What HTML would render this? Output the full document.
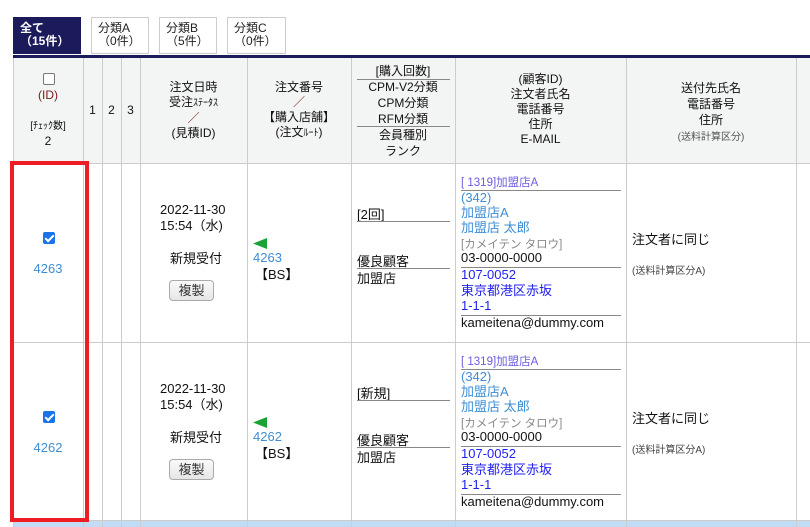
<!DOCTYPE html>
<html><head><meta charset="utf-8">
<style>
*{margin:0;padding:0;box-sizing:border-box}
body{width:810px;height:527px;overflow:hidden;background:#fff;position:relative;font-family:"Liberation Sans","Noto Sans CJK JP",sans-serif;font-size:12px;color:#111}
.a{position:absolute;white-space:nowrap}
.tab{position:absolute;top:17px;height:37px;border:1px solid #ccc;background:#fff;line-height:13px;font-size:12px;padding:4px 0 0 6px;color:#222}
.v{position:absolute;top:58px;height:469px;width:1px;background:#ccc}
.h{position:absolute;left:13px;width:797px;height:1px;background:#ccc}
.c{text-align:center}
.ln{position:absolute;height:1px;background:#888}
.blue{color:#3d8ed6}
.pur{color:#6b5ce0}
.bl{color:#2222ee}
.gr{color:#888}
.r .a{font-size:13px}
.r .a.s{font-size:10px}
.r .a.m{font-size:11.5px}
.cb{position:absolute;width:12px;height:12px;border-radius:2px;background:#1a73e8}
.cb:after{content:"";position:absolute;left:4px;top:1px;width:3px;height:7px;border:solid #fff;border-width:0 2px 2px 0;transform:rotate(45deg)}
.btn{position:absolute;width:45px;height:21px;border:1px solid #aaa;border-radius:4px;background:linear-gradient(#fafafa,#e6e6e6);text-align:center;line-height:19px;font-size:13px;color:#333}
</style></head><body>
<div class="tab" style="left:13px;width:68px;background:#1b1b5c;border-color:#1b1b5c;color:#fff;font-weight:bold">全て<br>（15件）</div>
<div class="tab" style="left:91px;width:58px">分類A<br>（0件）</div>
<div class="tab" style="left:159px;width:58px">分類B<br>（5件）</div>
<div class="tab" style="left:227px;width:59px">分類C<br>（0件）</div>
<div class="a" style="left:13px;top:55px;width:797px;height:3px;background:#1b1b5c"></div>
<div class="a" style="left:13px;top:58px;width:797px;height:105px;background:#f3f4f4"></div>
<div class="a" style="left:13px;top:520px;width:797px;height:7px;background:#c3dcf5"></div>

<div class="v" style="left:13px"></div>
<div class="v" style="left:83px"></div>
<div class="v" style="left:102px"></div>
<div class="v" style="left:121px"></div>
<div class="v" style="left:140px"></div>
<div class="v" style="left:247px"></div>
<div class="v" style="left:351px"></div>
<div class="v" style="left:455px"></div>
<div class="v" style="left:626px"></div>
<div class="v" style="left:796px"></div>
<div class="h" style="top:163px"></div>
<div class="h" style="top:342px"></div>
<div class="h" style="top:520px"></div>

<!-- header -->
<div class="a" style="left:43px;top:73px;width:12px;height:12px;border:1px solid #777;border-radius:2px;background:#fff"></div>
<div class="a c" style="left:13px;top:88px;width:70px;color:#7a1a1a;line-height:15px">(ID)</div>
<div class="a c" style="left:13px;top:120px;width:70px;font-size:10px;line-height:14px">[ﾁｪｯｸ数]<br><span style="font-size:12px">2</span></div>
<div class="a c" style="left:83px;top:103px;width:19px">1</div>
<div class="a c" style="left:102px;top:103px;width:19px">2</div>
<div class="a c" style="left:121px;top:103px;width:19px">3</div>
<div class="a c" style="left:140px;top:80px;width:107px;line-height:15px">注文日時<br>受注<span style="font-size:10px">ｽﾃｰﾀｽ</span><br><span style="color:#7a1a1a">／</span><br>(見積ID)</div>
<div class="a c" style="left:247px;top:80px;width:104px;line-height:15px">注文番号<br><span style="color:#7a1a1a">／</span><br>【購入店舗】<br>(注文<span style="font-size:10px">ﾙｰﾄ</span>)</div>
<div class="a c" style="left:351px;top:63px;width:104px;line-height:16px">[購入回数]<br>CPM-V2分類<br>CPM分類<br>RFM分類<br>会員種別<br>ランク</div>
<div class="ln" style="left:357px;top:79px;width:93px"></div>
<div class="ln" style="left:357px;top:126px;width:93px"></div>
<div class="a c" style="left:455px;top:72px;width:171px;line-height:15px">(顧客ID)<br>注文者氏名<br>電話番号<br>住所<br>E-MAIL</div>
<div class="a c" style="left:626px;top:80px;width:170px;line-height:16px">送付先氏名<br>電話番号<br>住所<br><span style="font-size:10px;color:#555">(送料計算区分)</span></div>

<div class="r" style="position:absolute;left:0;top:0;width:810px;height:527px">
<div class="cb" style="left:43px;top:232px"></div>
<div class="a c blue" style="left:13px;top:261px;width:70px">4263</div>
<div class="a" style="left:160px;top:202px;line-height:16px">2022-11-30<br>15:54（水)</div>
<div class="a" style="left:170px;top:248px">新規受付</div>
<div class="btn" style="left:169px;top:280px">複製</div>
<svg class="a" style="left:253px;top:238px" width="16" height="11"><path d="M0 5.5 L14 0 L14 11 Z" fill="#1aa335"/></svg>
<div class="a blue" style="left:253px;top:250px">4263</div>
<div class="a" style="left:255px;top:264px">【BS】</div>
<div class="a" style="left:357px;top:204px">[2回]</div>
<div class="ln" style="left:357px;top:221px;width:93px"></div>
<div class="a" style="left:357px;top:251px">優良顧客</div>
<div class="ln" style="left:357px;top:268px;width:93px"></div>
<div class="a" style="left:357px;top:268px">加盟店</div>
<div class="a pur m" style="left:461px;top:174px">[ 1319]加盟店A</div>
<div class="ln" style="left:461px;top:190px;width:160px"></div>
<div class="a blue" style="left:461px;top:190px;line-height:15px">(342)<br>加盟店A<br>加盟店 太郎</div>
<div class="a gr m" style="left:461px;top:236px">[カメイテン タロウ]</div>
<div class="a" style="left:461px;top:250px">03-0000-0000</div>
<div class="ln" style="left:461px;top:267px;width:160px"></div>
<div class="a bl" style="left:461px;top:267px;line-height:15.5px">107-0052<br>東京都港区赤坂<br>1-1-1</div>
<div class="ln" style="left:461px;top:315px;width:160px"></div>
<div class="a" style="left:461px;top:315px">kameitena@dummy.com</div>
<div class="a" style="left:632px;top:229px">注文者に同じ</div>
<div class="a s" style="left:632px;top:262px;color:#444">(送料計算区分A)</div>
</div>
<div class="r" style="position:absolute;left:0;top:179px;width:810px;height:200px">
<div class="cb" style="left:43px;top:232px"></div>
<div class="a c blue" style="left:13px;top:261px;width:70px">4262</div>
<div class="a" style="left:160px;top:202px;line-height:16px">2022-11-30<br>15:54（水)</div>
<div class="a" style="left:170px;top:248px">新規受付</div>
<div class="btn" style="left:169px;top:280px">複製</div>
<svg class="a" style="left:253px;top:238px" width="16" height="11"><path d="M0 5.5 L14 0 L14 11 Z" fill="#1aa335"/></svg>
<div class="a blue" style="left:253px;top:250px">4262</div>
<div class="a" style="left:255px;top:264px">【BS】</div>
<div class="a" style="left:357px;top:204px">[新規]</div>
<div class="ln" style="left:357px;top:221px;width:93px"></div>
<div class="a" style="left:357px;top:251px">優良顧客</div>
<div class="ln" style="left:357px;top:268px;width:93px"></div>
<div class="a" style="left:357px;top:268px">加盟店</div>
<div class="a pur m" style="left:461px;top:174px">[ 1319]加盟店A</div>
<div class="ln" style="left:461px;top:190px;width:160px"></div>
<div class="a blue" style="left:461px;top:190px;line-height:15px">(342)<br>加盟店A<br>加盟店 太郎</div>
<div class="a gr m" style="left:461px;top:236px">[カメイテン タロウ]</div>
<div class="a" style="left:461px;top:250px">03-0000-0000</div>
<div class="ln" style="left:461px;top:267px;width:160px"></div>
<div class="a bl" style="left:461px;top:267px;line-height:15.5px">107-0052<br>東京都港区赤坂<br>1-1-1</div>
<div class="ln" style="left:461px;top:315px;width:160px"></div>
<div class="a" style="left:461px;top:315px">kameitena@dummy.com</div>
<div class="a" style="left:632px;top:229px">注文者に同じ</div>
<div class="a s" style="left:632px;top:262px;color:#444">(送料計算区分A)</div>
</div>

<!-- red highlight -->
<div class="a" style="left:10px;top:161px;width:79px;height:361px;border:4px solid #ee1c25"></div>
</body></html>
